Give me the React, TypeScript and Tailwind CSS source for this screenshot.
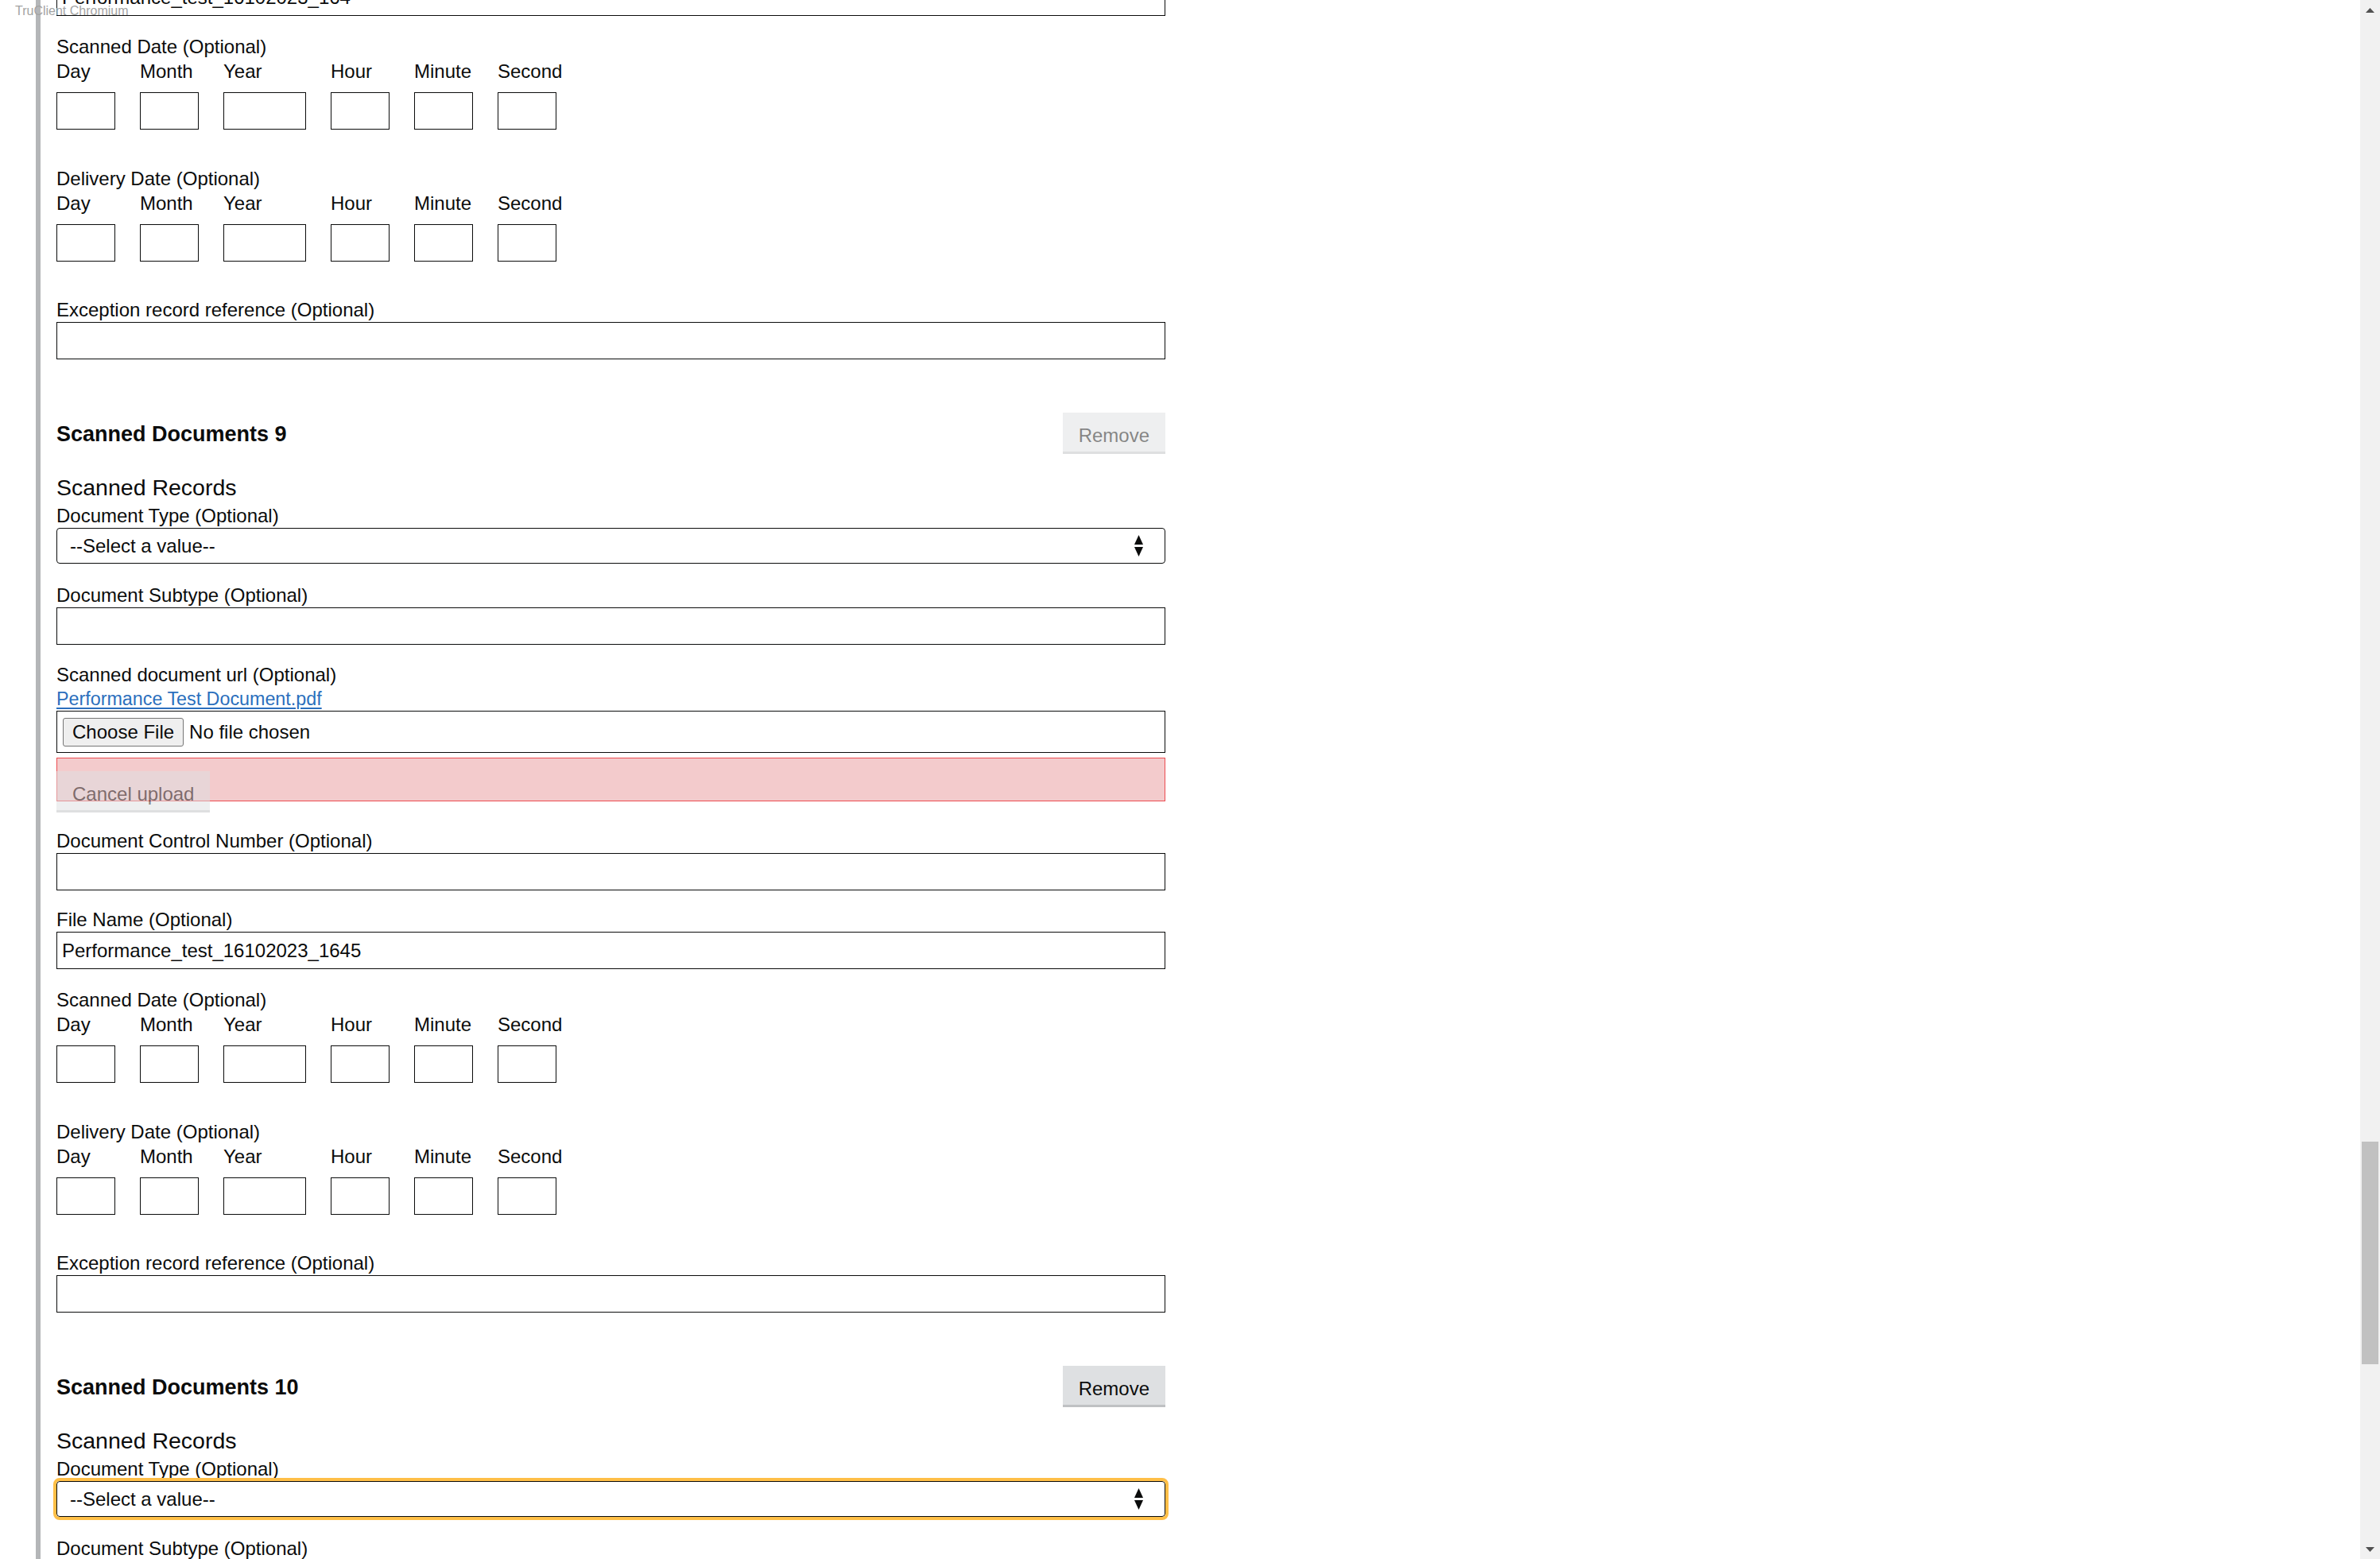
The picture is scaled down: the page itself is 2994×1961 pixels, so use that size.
import clsx from "clsx";

const dateParts = [
  { label: "Day", w: "w-[74px]" },
  { label: "Month", w: "w-[74px]" },
  { label: "Year", w: "w-[104px]" },
  { label: "Hour", w: "w-[74px]" },
  { label: "Minute", w: "w-[74px]" },
  { label: "Second", w: "w-[74px]" },
];

function Label({ children }: { children: React.ReactNode }) {
  return <div className="text-[24px] leading-[30px] whitespace-nowrap">{children}</div>;
}

function TextInput({ value = "" }: { value?: string }) {
  return (
    <input
      readOnly
      defaultValue={value}
      className="block h-[47px] w-full border border-[#0b0c0c] bg-white px-[6px] text-[24px] leading-[30px] text-[#0b0c0c] outline-none"
    />
  );
}

function Button({ children, disabled }: { children: React.ReactNode; disabled?: boolean }) {
  return (
    <button
      className={clsx(
        "h-[49px] shrink-0 bg-[#dee0e2] px-[20px] pt-[8px] text-[24px] leading-[30px] text-[#0b0c0c] shadow-[0_3px_0_#bfc1c3]",
        disabled && "opacity-50"
      )}
    >
      {children}
    </button>
  );
}

function DateGroup({ title, className }: { title: string; className?: string }) {
  return (
    <div className={className}>
      <Label>{title}</Label>
      <div className="mt-[1px] flex gap-[31px]">
        {dateParts.map((p) => (
          <div key={p.label} className={p.w}>
            <Label>{p.label}</Label>
            <div className="mt-[11px] h-[47px] border border-[#0b0c0c]" />
          </div>
        ))}
      </div>
    </div>
  );
}

function SelectBox({ focused }: { focused?: boolean }) {
  return (
    <div
      className={clsx(
        "flex h-[45px] items-center justify-between rounded-[4px] border border-[#0b0c0c] bg-white pl-[16px] pr-[27px] text-[24px]",
        focused && "outline-[4px] outline-solid outline-[#ffbf47]"
      )}
    >
      <span>--Select a value--</span>
      <svg width="11" height="27" viewBox="0 0 11 27" className="text-[#0b0c0c]">
        <polygon points="0,12 5.5,0 11,12" fill="currentColor" />
        <polygon points="0,15 11,15 5.5,27" fill="currentColor" />
      </svg>
    </div>
  );
}

// file name, dates and exception reference: shared by every document block
function Tail({ fileName }: { fileName: string }) {
  return (
    <>
      <div className="mt-[22px]">
        <Label>File Name (Optional)</Label>
        <TextInput value={fileName} />
      </div>
      <DateGroup title="Scanned Date (Optional)" className="mt-[24px]" />
      <DateGroup title="Delivery Date (Optional)" className="mt-[47px]" />
      <div className="mt-[46px]">
        <Label>Exception record reference (Optional)</Label>
        <TextInput />
      </div>
    </>
  );
}

function ScannedDocument({ n, removeDisabled, focused }: { n: number; removeDisabled?: boolean; focused?: boolean }) {
  return (
    <section className="mt-[67px]">
      <div className="flex items-start justify-between">
        <h2 className="mt-[10px] text-[27px] leading-[34px] font-bold">Scanned Documents {n}</h2>
        <Button disabled={removeDisabled}>Remove</Button>
      </div>

      <h3 className="mt-[28px] text-[28.5px] leading-[34px]">Scanned Records</h3>
      <div className="mt-[4px]">
        <Label>Document Type (Optional)</Label>
        <SelectBox focused={focused} />
      </div>

      <div className="mt-[25px]">
        <Label>Document Subtype (Optional)</Label>
        <TextInput />
      </div>

      <div className="mt-[23px]">
        <Label>Scanned document url (Optional)</Label>
        <a href="#" className="block w-fit text-[23.3px] leading-[30px] text-[#2b6fbd] underline underline-offset-[3px]">
          Performance Test Document.pdf
        </a>
        <div className="flex h-[53px] items-center border border-[#0b0c0c] px-[7px] text-[24px]">
          <span className="flex h-[36px] items-center rounded-[3px] border border-[#767676] bg-[#efefef] px-[11px]">
            Choose File
          </span>
          <span className="ml-[7px]">No file chosen</span>
        </div>
        <div className="mt-[6px] h-[55px] border-[1.5px] border-[#ec4b50] bg-[#f3cbcc]" />
        <div className="-mt-[38px]">
          <Button disabled>Cancel upload</Button>
        </div>
      </div>

      <div className="mt-[24px]">
        <Label>Document Control Number (Optional)</Label>
        <TextInput />
      </div>

      <Tail fileName="Performance_test_16102023_1645" />
    </section>
  );
}

function Scrollbar() {
  return (
    <div className="flex h-full w-[25px] shrink-0 flex-col bg-[#f1f1f1]">
      <div className="flex h-[25px] items-center justify-center">
        <svg width="11" height="6" viewBox="0 0 11 6">
          <polygon points="0,6 5.5,0 11,6" fill="#505050" />
        </svg>
      </div>
      <div className="mx-[2px] mt-[1411px] h-[280px] bg-[#c1c1c1]" />
      <div className="flex-1" />
      <div className="flex h-[25px] items-center justify-center">
        <svg width="11" height="6" viewBox="0 0 11 6">
          <polygon points="0,0 11,0 5.5,6" fill="#505050" />
        </svg>
      </div>
    </div>
  );
}

export default function App() {
  return (
    <div className="relative flex h-screen w-full overflow-hidden bg-white font-['Liberation_Sans',Arial,sans-serif] text-[#0b0c0c]">
      <div className="min-w-0 flex-1 overflow-hidden">
        <div className="ml-[45px] border-l-[6px] border-[#b4b6b8] pl-[20px]">
          <div className="-mt-[27px] w-[1395px] pb-[200px]">
            <TextInput value="Performance_test_16102023_164" />
            <DateGroup title="Scanned Date (Optional)" className="mt-[24px]" />
            <DateGroup title="Delivery Date (Optional)" className="mt-[47px]" />
            <div className="mt-[46px]">
              <Label>Exception record reference (Optional)</Label>
              <TextInput />
            </div>

            <ScannedDocument n={9} removeDisabled />
            <ScannedDocument n={10} focused />
          </div>
        </div>
      </div>

      <Scrollbar />

      <div className="pointer-events-none absolute left-[19px] top-[4px] text-[16px] leading-[20px] text-[#a3a3a3]">
        TruClient Chromium
      </div>
    </div>
  );
}
